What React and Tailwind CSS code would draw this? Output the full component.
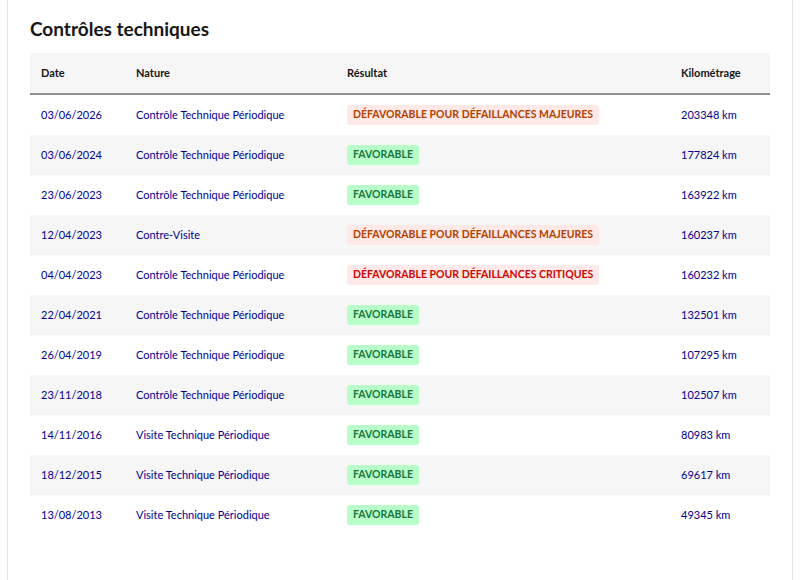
import React from "react";

const rows = [
  ["03/06/2026", "Contrôle Technique Périodique", "maj", "203348 km"],
  ["03/06/2024", "Contrôle Technique Périodique", "fav", "177824 km"],
  ["23/06/2023", "Contrôle Technique Périodique", "fav", "163922 km"],
  ["12/04/2023", "Contre-Visite", "maj", "160237 km"],
  ["04/04/2023", "Contrôle Technique Périodique", "crit", "160232 km"],
  ["22/04/2021", "Contrôle Technique Périodique", "fav", "132501 km"],
  ["26/04/2019", "Contrôle Technique Périodique", "fav", "107295 km"],
  ["23/11/2018", "Contrôle Technique Périodique", "fav", "102507 km"],
  ["14/11/2016", "Visite Technique Périodique", "fav", "80983 km"],
  ["18/12/2015", "Visite Technique Périodique", "fav", "69617 km"],
  ["13/08/2013", "Visite Technique Périodique", "fav", "49345 km"],
];

const Badge = ({ kind }) => {
  if (kind === "fav")
    return (
      <span className="rounded-[3px] bg-[#b8fec9] px-[6px] py-[2px] text-[#18753c]">
        FAVORABLE
      </span>
    );
  if (kind === "maj")
    return (
      <span className="rounded-[3px] bg-[#ffe9e6] px-[6px] py-[2px] text-[#b34000]">
        DÉFAVORABLE POUR DÉFAILLANCES MAJEURES
      </span>
    );
  return (
    <span className="rounded-[3px] bg-[#ffe9e9] px-[6px] py-[2px] text-[#ce0500]">
      DÉFAVORABLE POUR DÉFAILLANCES CRITIQUES
    </span>
  );
};

const App = () => {
  return (
    <div className="h-[580px] overflow-hidden bg-white font-['Lato','Noto_Sans',sans-serif]">
      <div className="mx-[7px] h-full border-x border-[#e5e5e5] px-[22px] pt-[17px]">
        <h2 className="mb-[12px] text-[19px] font-bold leading-[24px] text-[#161616]">
          Contrôles techniques
        </h2>
        <div className="grid grid-cols-[95px_211px_334px_1fr] text-[11px]">
          <div className="contents font-bold text-[#161616]">
            {["Date", "Nature", "Résultat", "Kilométrage"].map((h) => (
              <div
                key={h}
                className="flex h-[42px] items-center border-b-2 border-[#929292] bg-[#f6f6f6] pl-[11px]"
              >
                {h}
              </div>
            ))}
          </div>
          {rows.map((r, i) => {
            const bg = i % 2 === 1 ? "bg-[#f6f6f6]" : "bg-white";
            return (
              <div key={i} className="contents text-[#000091]">
                <div className={`flex h-[40px] items-center pl-[11px] ${bg}`}>{r[0]}</div>
                <div className={`flex h-[40px] items-center pl-[11px] ${bg}`}>{r[1]}</div>
                <div className={`flex h-[40px] items-center pl-[11px] text-[10.5px] font-bold ${bg}`}>
                  <Badge kind={r[2]} />
                </div>
                <div className={`flex h-[40px] items-center pl-[11px] ${bg}`}>{r[3]}</div>
              </div>
            );
          })}
        </div>
      </div>
    </div>
  );
};

export default App;
